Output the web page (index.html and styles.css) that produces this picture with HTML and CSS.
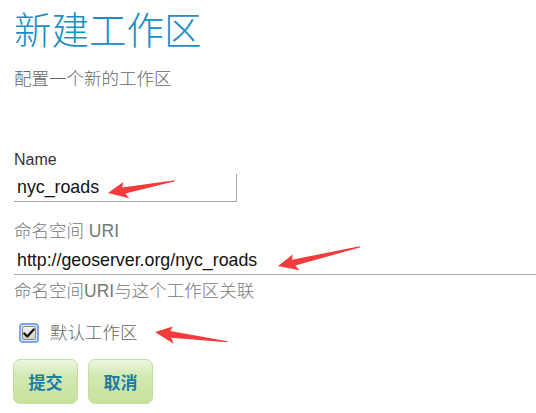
FILE: index.html
```html
<!DOCTYPE html>
<html lang="zh-CN">
<head>
<meta charset="utf-8">
<title>新建工作区</title>
<link rel="stylesheet" href="styles.css">
</head>
<body>
<div class="page">
  <h1 class="title">新建工作区</h1>
  <p class="desc">配置一个新的工作区</p>

  <div class="field">
    <div class="label label-name">Name</div>
    <div class="text-input short">nyc_roads</div>
  </div>

  <div class="field">
    <div class="label">命名空间 URI</div>
    <div class="text-input wide">http://geoserver.org/nyc_roads</div>
    <div class="help">命名空间URI与这个工作区关联</div>
  </div>

  <div class="check-row">
    <span class="checkbox">
      <span class="checkbox-inner">
        <svg width="14" height="12" viewBox="0 0 14 12"><path d="M1.5 6.5 L5 10 L12.5 1.8" fill="none" stroke="#111" stroke-width="2.6" stroke-linejoin="round" stroke-linecap="round"/></svg>
      </span>
    </span>
    <span class="check-label">默认工作区</span>
  </div>

  <div class="buttons">
    <button class="btn">提交</button>
    <button class="btn">取消</button>
  </div>

  <svg class="arrows" width="536" height="413" viewBox="0 0 536 413">
    <g fill="#f43b3b">
      <path transform="translate(108 193) rotate(-10.2)" d="M0 0 L17 -8 L15 -3 L68 -0.8 L68 0.3 L17 3.5 L20 9 Z"/>
      <path transform="translate(278 266) rotate(-13)" d="M0 0 L17 -8 L15 -3 L84 -0.8 L84 0.3 L17 3.5 L20 9 Z"/>
      <path transform="translate(155 332) rotate(7.9)" d="M0 0 L17 -8 L15 -3 L73 -0.8 L73 0.3 L17 3.5 L20 9 Z"/>
    </g>
  </svg>
</div>
</body>
</html>
```

FILE: styles.css
```css
html, body {
  margin: 0;
  padding: 0;
  background: #ffffff;
}

.page {
  position: relative;
  width: 536px;
  height: 413px;
  padding-left: 14px;
  box-sizing: border-box;
  font-family: "Liberation Sans", "Noto Sans CJK SC", sans-serif;
  overflow: hidden;
}

.title {
  margin: 2px 0 0;
  font-family: "Noto Sans CJK SC", sans-serif;
  font-weight: 300;
  font-size: 37.5px;
  line-height: 52px;
  color: #1b8ec2;
}

.desc {
  margin: 13px 0 0;
  font-weight: 300;
  font-size: 17.5px;
  line-height: 24px;
  color: #666;
}

.field {
  display: flex;
  flex-direction: column;
}

.label {
  margin-top: 17px;
  font-size: 17.5px;
  line-height: 24px;
  color: #777;
  font-weight: 300;
}

.label-name {
  margin-top: 59px;
  font-size: 16px;
  line-height: 20px;
  color: #333;
  font-weight: 400;
}

.text-input {
  margin-top: 4px;
  height: 27px;
  padding-left: 3px;
  font-size: 17.8px;
  line-height: 27px;
  color: #111;
  border-bottom: 1px solid #a8a8a8;
  white-space: nowrap;
}

.text-input.short {
  width: 219px;
  border-right: 1px solid #a8a8a8;
}

.help {
  margin-top: 4px;
  font-size: 17.5px;
  line-height: 24px;
  color: #777;
  font-weight: 300;
}

.check-row {
  display: flex;
  align-items: center;
  margin-top: 20px;
  height: 20px;
}

.checkbox {
  display: flex;
  align-items: center;
  justify-content: center;
  width: 20px;
  height: 20px;
  margin-left: 5px;
  box-sizing: border-box;
  border: 2px solid #79a6ec;
  border-radius: 4px;
  background: #dfe9fb;
}

.checkbox-inner {
  display: flex;
  align-items: center;
  justify-content: center;
  width: 14px;
  height: 14px;
  box-sizing: border-box;
  border: 1px solid #8a8a8a;
  border-radius: 2px;
  background: linear-gradient(#f4f4f4, #cfcfcf);
}

.check-label {
  margin-left: 11px;
  font-size: 17.5px;
  line-height: 24px;
  color: #666;
  font-weight: 300;
}

.buttons {
  display: flex;
  gap: 10px;
  margin-top: 16px;
  margin-left: -1px;
}

.btn {
  width: 65px;
  height: 45px;
  padding: 0;
  border: 1px solid #c3df9c;
  border-radius: 7px;
  background: linear-gradient(#eef7e2 0%, #d3e9b3 35%, #c6e19c 100%);
  font-family: "Noto Sans CJK SC", serif;
  font-weight: 700;
  font-size: 17px;
  color: #1a7ca5;
}

.arrows {
  position: absolute;
  left: 0;
  top: 0;
  pointer-events: none;
}
```
